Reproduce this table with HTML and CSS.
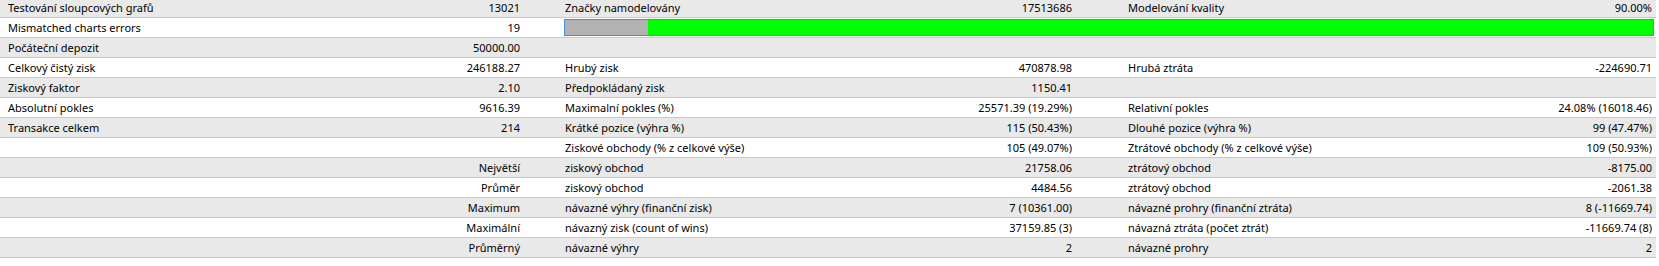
FILE: index.html
```html
<!DOCTYPE html>
<html lang="cs">
<head>
<meta charset="utf-8">
<title>Report</title>
<link rel="stylesheet" href="styles.css">
</head>
<body>
<div class="report">
  <div class="row alt">
    <div class="lbl1">Testování sloupcových grafů</div><div class="val1">13021</div>
    <div class="lbl2">Značky namodelovány</div><div class="val2">17513686</div>
    <div class="lbl3">Modelování kvality</div><div class="val3">90.00%</div>
  </div>
  <div class="row">
    <div class="lbl1">Mismatched charts errors</div><div class="val1">19</div>
    <div class="barcell"><div class="bar"><div class="bar-gray" style="width:7.65%"></div><div class="bar-green"></div></div></div>
  </div>
  <div class="row alt">
    <div class="lbl1">Počáteční depozit</div><div class="val1">50000.00</div>
    <div class="lbl2"></div><div class="val2"></div><div class="lbl3"></div><div class="val3"></div>
  </div>
  <div class="row">
    <div class="lbl1">Celkový čistý zisk</div><div class="val1">246188.27</div>
    <div class="lbl2">Hrubý zisk</div><div class="val2">470878.98</div>
    <div class="lbl3">Hrubá ztráta</div><div class="val3">-224690.71</div>
  </div>
  <div class="row alt">
    <div class="lbl1">Ziskový faktor</div><div class="val1">2.10</div>
    <div class="lbl2">Předpokládaný zisk</div><div class="val2">1150.41</div>
    <div class="lbl3"></div><div class="val3"></div>
  </div>
  <div class="row">
    <div class="lbl1">Absolutní pokles</div><div class="val1">9616.39</div>
    <div class="lbl2">Maximalní pokles (%)</div><div class="val2">25571.39 (19.29%)</div>
    <div class="lbl3">Relativní pokles</div><div class="val3">24.08% (16018.46)</div>
  </div>
  <div class="row alt">
    <div class="lbl1">Transakce celkem</div><div class="val1">214</div>
    <div class="lbl2">Krátké pozice (výhra %)</div><div class="val2">115 (50.43%)</div>
    <div class="lbl3">Dlouhé pozice (výhra %)</div><div class="val3">99 (47.47%)</div>
  </div>
  <div class="row">
    <div class="lbl1"></div><div class="val1"></div>
    <div class="lbl2">Ziskové obchody (% z celkové výše)</div><div class="val2">105 (49.07%)</div>
    <div class="lbl3">Ztrátové obchody (% z celkové výše)</div><div class="val3">109 (50.93%)</div>
  </div>
  <div class="row alt">
    <div class="lbl1"></div><div class="val1">Největší</div>
    <div class="lbl2">ziskový obchod</div><div class="val2">21758.06</div>
    <div class="lbl3">ztrátový obchod</div><div class="val3">-8175.00</div>
  </div>
  <div class="row">
    <div class="lbl1"></div><div class="val1">Průměr</div>
    <div class="lbl2">ziskový obchod</div><div class="val2">4484.56</div>
    <div class="lbl3">ztrátový obchod</div><div class="val3">-2061.38</div>
  </div>
  <div class="row alt">
    <div class="lbl1"></div><div class="val1">Maximum</div>
    <div class="lbl2">návazné výhry (finanční zisk)</div><div class="val2">7 (10361.00)</div>
    <div class="lbl3">návazné prohry (finanční ztráta)</div><div class="val3">8 (-11669.74)</div>
  </div>
  <div class="row">
    <div class="lbl1"></div><div class="val1">Maximální</div>
    <div class="lbl2">návazný zisk (count of wins)</div><div class="val2">37159.85 (3)</div>
    <div class="lbl3">návazná ztráta (počet ztrát)</div><div class="val3">-11669.74 (8)</div>
  </div>
  <div class="row alt">
    <div class="lbl1"></div><div class="val1">Průměrný</div>
    <div class="lbl2">návazné výhry</div><div class="val2">2</div>
    <div class="lbl3">návazné prohry</div><div class="val3">2</div>
  </div>
</div>
</body>
</html>
```

FILE: styles.css
```css
html, body {
  margin: 0;
  padding: 0;
  background: #ffffff;
}
body {
  font-family: "Noto Sans", "Liberation Sans", Arial, sans-serif;
  font-size: 11px;
  color: #000000;
}
.report {
  width: 1656px;
  margin-top: -2px;
}
.row {
  display: grid;
  grid-template-columns: 280px 280px 250px 314px 276px 256px;
  height: 19px;
  border-bottom: 1px solid #c9c9c9;
  background: #ffffff;
}
.row.alt {
  background: #e9e9e9;
}
.row > div {
  line-height: 19px;
  white-space: nowrap;
  overflow: hidden;
}
.lbl1 { padding-left: 8px; }
.val1 { text-align: right; padding-right: 40px; }
.lbl2 { padding-left: 5px; }
.val2 { text-align: right; padding-right: 52px; }
.lbl3 { padding-left: 4px; }
.val3 { text-align: right; padding-right: 4px; }
.barcell {
  grid-column: 3 / 7;
  padding: 1px 2px 1px 4px;
}
.bar {
  display: flex;
  height: 15px;
  border: 1px solid #3f8fe6;
  background: #00ff00;
}
.bar-gray {
  background: #b2b2b2;
}
.bar-green {
  flex: 1;
  background: #00ff00;
}
```
